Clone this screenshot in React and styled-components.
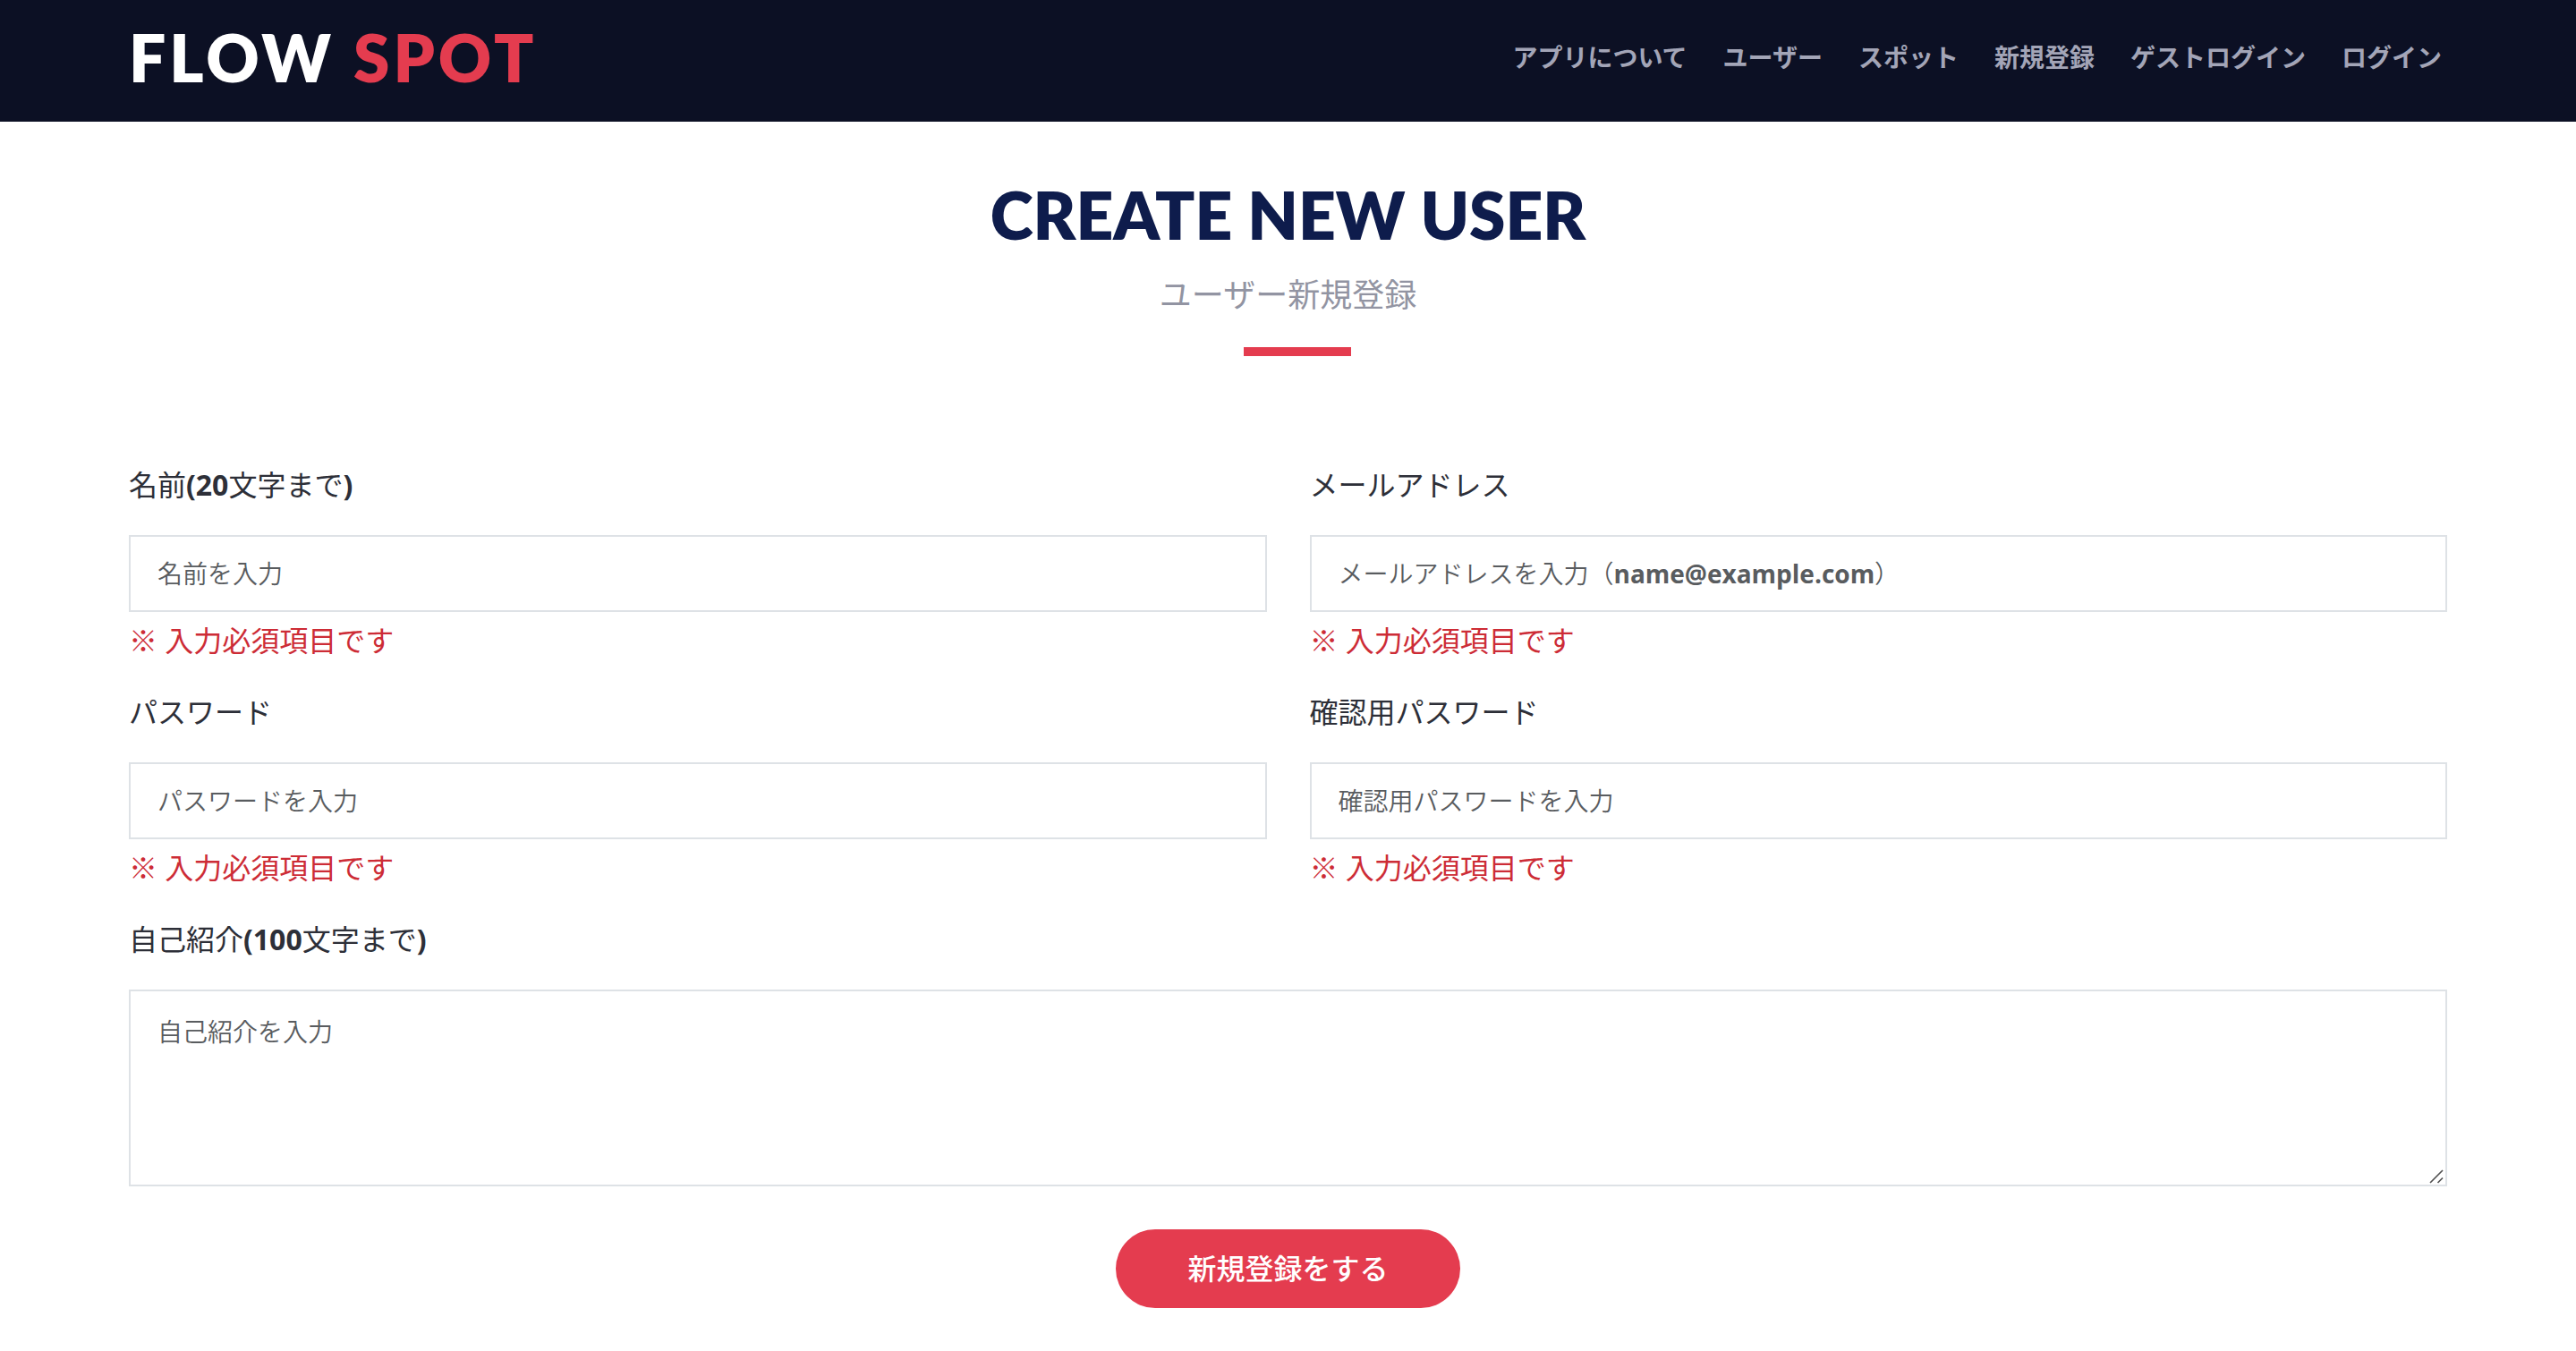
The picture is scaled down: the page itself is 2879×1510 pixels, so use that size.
import React from "react";
import styled, { createGlobalStyle } from "styled-components";

const GlobalStyle = createGlobalStyle`
  *, *::before, *::after { box-sizing: border-box; }
  body {
    margin: 0;
    background: #fff;
    color: #2d2f38;
    font-family: "Open Sans", "Noto Sans CJK JP", sans-serif;
    font-size: 32px;
    line-height: 48px;
  }
`;

const Header = styled.header`
  display: flex;
  align-items: center;
  justify-content: space-between;
  height: 136px;
  padding: 0 5% 8px;
  background: #0c1024;
`;

const Logo = styled.a`
  color: #fff;
  font-family: Lato, sans-serif;
  font-size: 73px;
  font-weight: 800;
  line-height: 88px;
  letter-spacing: 4px;
  text-decoration: none;
`;

const Accent = styled.span`
  color: #e43c4f;
`;

const Nav = styled.nav`
  display: flex;
  gap: 40px;
  padding: 0 6px 2px 0;
`;

const NavLink = styled.a`
  color: #a3a5b7;
  font-family: "Noto Sans CJK JP", sans-serif;
  font-size: 28px;
  font-weight: 700;
  text-decoration: none;
`;

const Main = styled.main`
  padding: 60px 5% 48px;
`;

const SectionHeader = styled.div`
  display: flex;
  flex-direction: column;
  align-items: center;
`;

const Title = styled.h1`
  margin: 0;
  color: #0e1c4c;
  font-family: Lato, sans-serif;
  font-size: 73px;
  font-weight: 800;
  line-height: 88px;
`;

const Subtitle = styled.p`
  margin: 20px 0 32px;
  color: #9294a2;
  font-size: 36px;
  line-height: 52px;
`;

const Divider = styled.span`
  width: 120px;
  height: 10px;
  margin-left: 20px;
  background: #e43c4f;
`;

const Form = styled.form`
  display: grid;
  grid-template-columns: 1fr 1fr;
  gap: 32px 48px;
  margin-top: 120px;
`;

const Field = styled.div`
  display: flex;
  flex-direction: column;
  grid-column: ${(p) => (p.$wide ? "1 / -1" : "auto")};
`;

const Label = styled.label`
  margin-bottom: 32px;
`;

const controlStyles = `
  display: block;
  width: 100%;
  border: 2px solid #dee2e6;
  border-radius: 0;
  background: #fff;
  color: #495057;
  font-family: "Open Sans", "Noto Sans CJK JP", sans-serif;
  font-size: 28px;
  line-height: 42px;
  &::placeholder {
    color: #595c5f;
    opacity: 1;
    font-family: "Open Sans", "Noto Sans CJK JP Regular", "Noto Sans CJK JP DemiLight", "Noto Sans CJK JP Medium", "Noto Sans CJK JP", sans-serif;
    font-weight: 700;
    font-synthesis: none;
  }
`;

const Input = styled.input`
  ${controlStyles}
  height: 86px;
  padding: 0 30px;
`;

const TextAreaBox = styled.div`
  position: relative;
`;

const TextArea = styled.textarea`
  ${controlStyles}
  height: 220px;
  padding: 24px 30px;
  resize: vertical;
  &::-webkit-resizer { background: transparent; }
`;

const Grip = styled.svg`
  position: absolute;
  right: 2px;
  bottom: 2px;
  width: 18px;
  height: 18px;
  stroke: #505050;
  stroke-width: 1.6;
  pointer-events: none;
`;

const ErrorText = styled.span`
  margin-top: 8px;
  color: #cd2c36;
`;

const Submit = styled.button`
  grid-column: 1 / -1;
  justify-self: center;
  height: 88px;
  margin-top: 16px;
  padding: 0 80px 4px;
  border: 0;
  border-radius: 44px;
  background: #e43c4f;
  color: #fff;
  font-family: "Noto Sans CJK JP", sans-serif;
  font-size: 32px;
  font-weight: 500;
  line-height: 48px;
`;

const links = ["アプリについて", "ユーザー", "スポット", "新規登録", "ゲストログイン", "ログイン"];

const fields = [
  { id: "name", type: "text", label: <>名前<b>(20</b>文字まで<b>)</b></>, placeholder: "名前を入力" },
  { id: "email", type: "email", label: "メールアドレス", placeholder: "メールアドレスを入力（name@example.com）" },
  { id: "password", type: "password", label: "パスワード", placeholder: "パスワードを入力" },
  { id: "confirm", type: "password", label: "確認用パスワード", placeholder: "確認用パスワードを入力" },
];

export default function App() {
  return (
    <>
      <GlobalStyle />
      <Header>
        <Logo href="#">FLOW <Accent>SPOT</Accent></Logo>
        <Nav>
          {links.map((text) => (
            <NavLink key={text} href="#">{text}</NavLink>
          ))}
        </Nav>
      </Header>
      <Main>
        <SectionHeader>
          <Title>CREATE NEW USER</Title>
          <Subtitle>ユーザー新規登録</Subtitle>
          <Divider />
        </SectionHeader>
        <Form noValidate onSubmit={(e) => e.preventDefault()}>
          {fields.map((f) => (
            <Field key={f.id}>
              <Label htmlFor={f.id}>{f.label}</Label>
              <Input id={f.id} type={f.type} placeholder={f.placeholder} aria-describedby={`${f.id}-error`} />
              <ErrorText id={`${f.id}-error`}>※ 入力必須項目です</ErrorText>
            </Field>
          ))}
          <Field $wide>
            <Label htmlFor="introduction">自己紹介<b>(100</b>文字まで<b>)</b></Label>
            <TextAreaBox>
              <TextArea id="introduction" placeholder="自己紹介を入力" />
              <Grip viewBox="0 0 18 18" aria-hidden="true">
                <path d="M1 16L15 2M9.5 16L15 10.5" fill="none" />
              </Grip>
            </TextAreaBox>
          </Field>
          <Submit type="submit">新規登録をする</Submit>
        </Form>
      </Main>
    </>
  );
}
